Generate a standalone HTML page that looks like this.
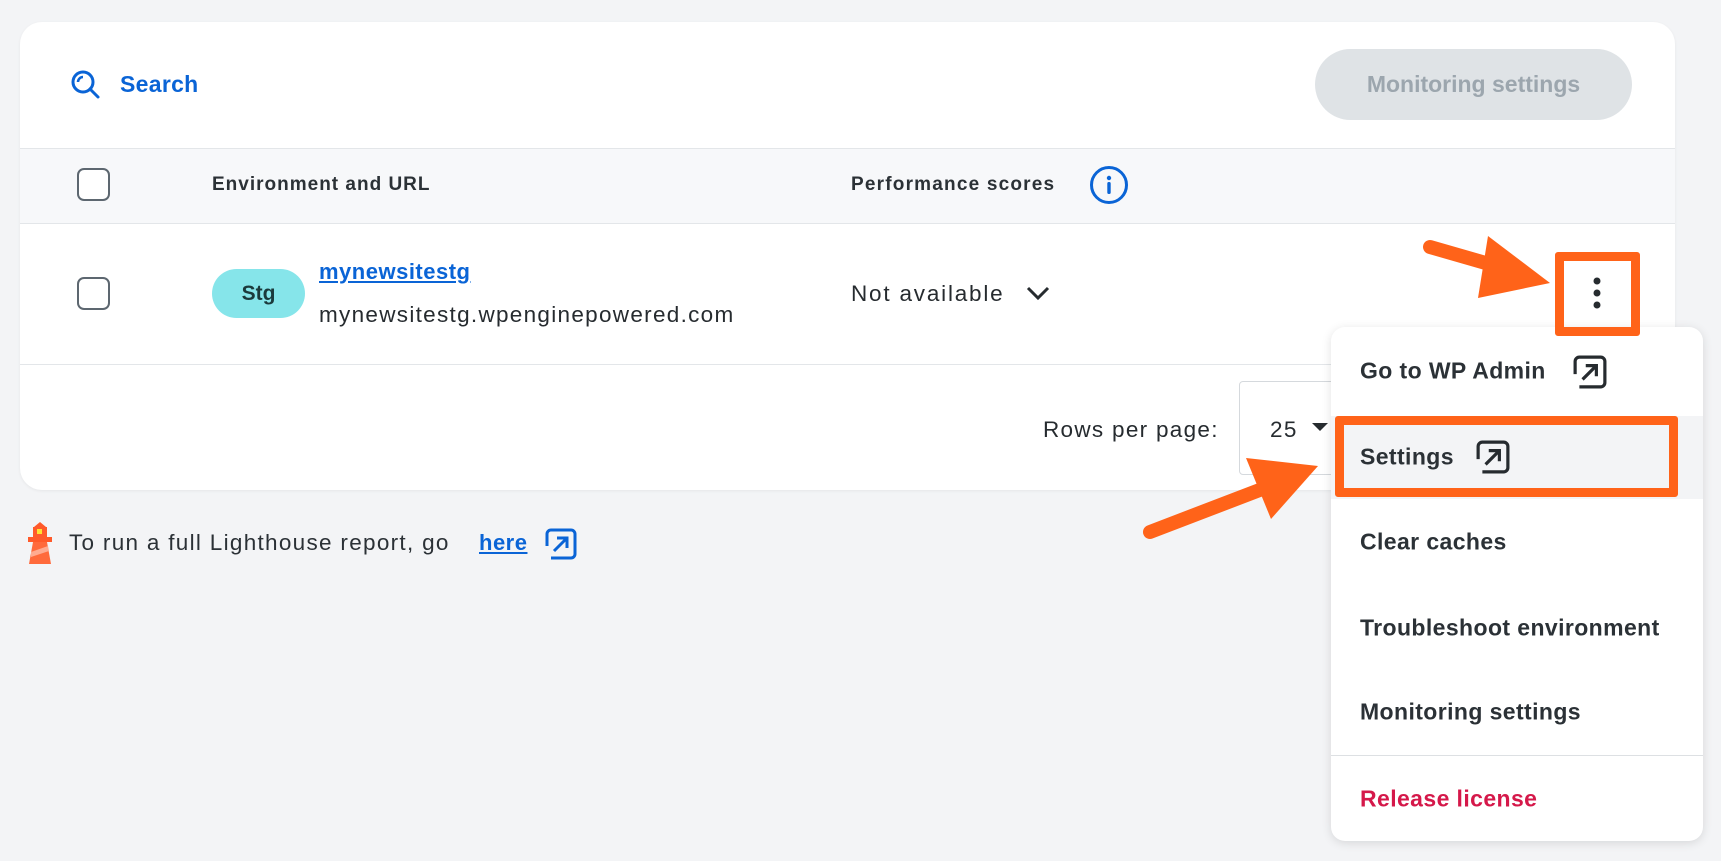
<!DOCTYPE html><html><head><style>
body{margin:0;width:1721px;height:861px;background:#f3f4f6;font-family:"Liberation Sans",sans-serif;position:relative;overflow:hidden;color:#262b2f}
.a{position:absolute}
.r{font-size:22.5px;letter-spacing:1.3px}
.card{left:20px;top:22px;width:1655px;height:468px;background:#fff;border-radius:22px;box-shadow:0 1px 3px rgba(0,0,0,.06)}
.cb{width:33px;height:33px;border:2px solid #5d6770;border-radius:7px;box-sizing:border-box;background:#fff}
.mi{left:29px;font-size:23px;font-weight:bold;color:#2b3136;transform:translateY(-50%);letter-spacing:0.4px}
</style></head><body>
<div class="a card"></div>
<svg class="a" style="left:70px;top:69px" width="32" height="32" viewBox="0 0 32 32"><circle cx="13" cy="13" r="10" fill="none" stroke="#0a64d6" stroke-width="3"/><path d="M20 20l8 8" stroke="#0a64d6" stroke-width="3" stroke-linecap="round"/><path d="M8 13a5 5 0 0 1 5-5" stroke="#0a64d6" stroke-width="2.5" fill="none"/></svg>
<div class="a" style="left:120px;top:71px;font-size:23px;font-weight:bold;color:#0a64d6;letter-spacing:0.3px">Search</div>
<div class="a" style="left:1315px;top:49px;width:317px;height:71px;border-radius:36px;background:#dfe3e6;color:#9ca6ae;font-weight:bold;font-size:23px;line-height:71px;text-align:center">Monitoring settings</div>
<div class="a" style="left:20px;top:148px;width:1655px;height:74px;background:#f7f8fa;border-top:1px solid #e3e6e9;border-bottom:1px solid #e3e6e9"></div>
<div class="a cb" style="left:77px;top:168px"></div>
<div class="a" style="left:212px;top:174px;font-size:19px;font-weight:bold;color:#2b3136;letter-spacing:1px">Environment and URL</div>
<div class="a" style="left:851px;top:174px;font-size:19px;font-weight:bold;color:#2b3136;letter-spacing:1.2px">Performance scores</div>
<svg class="a" style="left:1089px;top:165px" width="40" height="40" viewBox="0 0 40 40"><circle cx="20" cy="20" r="17.5" fill="none" stroke="#0a64d6" stroke-width="3"/><circle cx="20" cy="13" r="2.2" fill="#0a64d6"/><rect x="18.3" y="17" width="3.4" height="12" rx="1.5" fill="#0a64d6"/></svg>
<div class="a cb" style="left:77px;top:277px"></div>
<div class="a" style="left:212px;top:269px;width:93px;height:49px;border-radius:25px;background:#86e5ea;font-weight:bold;font-size:21px;line-height:49px;text-align:center;color:#1b3a3c">Stg</div>
<div class="a" style="left:319px;top:259px;font-size:22px;font-weight:bold;color:#0a64d6;text-decoration:underline;letter-spacing:0.5px">mynewsitestg</div>
<div class="a r" style="left:319px;top:302px;color:#262b2f">mynewsitestg.wpenginepowered.com</div>
<div class="a r" style="left:851px;top:281px;color:#262b2f;letter-spacing:1.8px">Not available</div>
<svg class="a" style="left:1024px;top:283px" width="28" height="20"><path d="M4 5l10 10 10-10" stroke="#262b2f" stroke-width="3" fill="none"/></svg>
<div class="a" style="left:20px;top:364px;width:1655px;height:1px;background:#e3e6e9"></div>
<svg class="a" style="left:1586px;top:275px" width="22" height="40"><circle cx="11" cy="6" r="3.5" fill="#262b2f"/><circle cx="11" cy="18" r="3.5" fill="#262b2f"/><circle cx="11" cy="30" r="3.5" fill="#262b2f"/></svg>
<div class="a r" style="left:1043px;top:417px">Rows per page:</div>
<div class="a" style="left:1239px;top:381px;width:120px;height:94px;border:1px solid #d5d9dd;border-radius:4px;box-sizing:border-box;background:#fff"></div>
<div class="a r" style="left:1270px;top:417px">25</div>
<svg class="a" style="left:1310px;top:420px" width="20" height="14"><path d="M2 3h16l-8 8z" fill="#262b2f"/></svg>
<svg class="a" style="left:25px;top:521px" width="30" height="44" viewBox="0 0 30 44"><path d="M9 6l6-5 6 5z" fill="#ff5a2a"/><rect x="8" y="6" width="14" height="10" fill="#ff5a2a"/><rect x="12" y="8" width="5" height="5" fill="#ffe033"/><rect x="3" y="16" width="24" height="5" fill="#ff5a2a"/><path d="M8 21h14l4 22H4z" fill="#ff6a3c"/><path d="M6 31l17-6 1 5-18 6z" fill="#ffab91"/></svg>
<div class="a r" style="left:69px;top:530px;color:#2b3136">To run a full Lighthouse report, go</div>
<div class="a" style="left:479px;top:530px;font-size:22px;font-weight:bold;color:#0a64d6;text-decoration:underline;letter-spacing:0.5px">here</div>
<svg class="a" style="left:545px;top:528px" width="32" height="32" viewBox="0 0 32 32"><rect x="2" y="2" width="28" height="28" rx="4" fill="none" stroke="#0a64d6" stroke-width="3"/><path d="M9 23L22 10M12 10h10v10" stroke="#0a64d6" stroke-width="3" fill="none"/><rect x="0" y="18" width="6" height="14" fill="#f3f4f6"/></svg>
<div class="a" style="left:1331px;top:327px;width:372px;height:514px;background:#fff;border-radius:14px;box-shadow:0 2px 10px rgba(0,0,0,.12)">
<div class="a" style="left:0;top:89px;width:372px;height:83px;background:#f3f4f6"></div>
<div class="a mi" style="top:44px">Go to WP Admin</div>
<div class="a mi" style="top:130px">Settings</div>
<div class="a mi" style="top:215px">Clear caches</div>
<div class="a mi" style="top:301px">Troubleshoot environment</div>
<div class="a mi" style="top:385px">Monitoring settings</div>
<div class="a" style="left:0;top:428px;width:372px;height:1px;background:#dde0e3"></div>
<div class="a mi" style="top:472px;color:#d5184a">Release license</div>
<svg class="a" style="left:242px;top:28px" width="34" height="34" viewBox="0 0 32 32"><rect x="2" y="2" width="28" height="28" rx="4" fill="none" stroke="#262b2f" stroke-width="3"/><path d="M9 23L22 10M12 10h10v10" stroke="#262b2f" stroke-width="3" fill="none"/><rect x="0" y="18" width="6" height="14" fill="#fff"/></svg>
<svg class="a" style="left:145px;top:113px" width="34" height="34" viewBox="0 0 32 32"><rect x="2" y="2" width="28" height="28" rx="4" fill="none" stroke="#262b2f" stroke-width="3"/><path d="M9 23L22 10M12 10h10v10" stroke="#262b2f" stroke-width="3" fill="none"/><rect x="0" y="18" width="6" height="14" fill="#f3f4f6"/></svg>
</div>
<div class="a" style="left:1555px;top:252px;width:85px;height:84px;border:9px solid #ff6319;box-sizing:border-box;border-radius:3px"></div>
<div class="a" style="left:1335px;top:416px;width:343px;height:81px;border:9px solid #ff6319;box-sizing:border-box;border-radius:3px"></div>
<svg class="a" style="left:0;top:0" width="1721" height="861">
<line x1="1430" y1="247" x2="1510" y2="270" stroke="#ff6319" stroke-width="14" stroke-linecap="round"/>
<path d="M1550 283L1488 236L1478 298Z" fill="#ff6319"/>
<line x1="1150" y1="532" x2="1270" y2="486" stroke="#ff6319" stroke-width="14" stroke-linecap="round"/>
<path d="M1318 466L1246 458L1271 519Z" fill="#ff6319"/>
</svg>
</body></html>
